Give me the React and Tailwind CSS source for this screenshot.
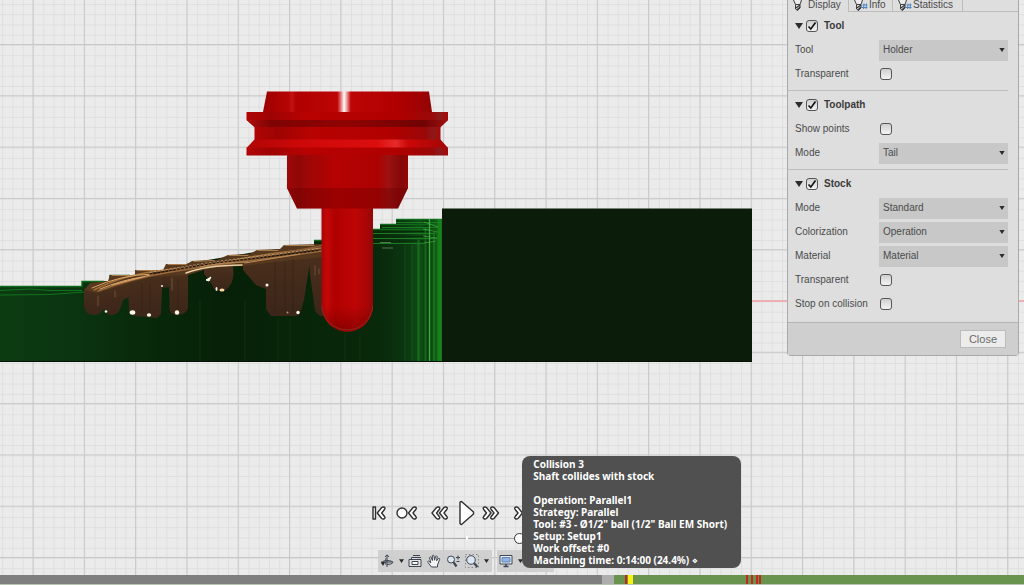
import React, { useState } from 'react';

const TOOLTIP_LINES = [
  'Collision 3',
  'Shaft collides with stock',
  '',
  'Operation: Parallel1',
  'Strategy: Parallel',
  'Tool: #3 - Ø1/2" ball (1/2" Ball EM Short)',
  'Setup: Setup1',
  'Work offset: #0',
  'Machining time: 0:14:00 (24.4%) ⋄',
];

function Scene() {
  return (
    <svg
      className="absolute inset-0 w-full h-full"
      viewBox="0 0 1024 575"
      preserveAspectRatio="xMidYMid slice"
      aria-hidden="true"
    >
      <defs>
        <pattern id="minor" x="33" y="45" width="10.26" height="10.26" patternUnits="userSpaceOnUse">
          <path d="M0 .5H10.26M.5 0V10.26" stroke="#dfdfdf" strokeWidth="1" />
        </pattern>
        <pattern id="major" x="32.5" y="44" width="51.3" height="51.3" patternUnits="userSpaceOnUse">
          <path d="M0 .5H51.3M.5 0V51.3" stroke="#c8c8c8" strokeWidth="1" />
        </pattern>
        <linearGradient id="green" gradientUnits="userSpaceOnUse" x1="0" x2="442" y1="0" y2="0">
          <stop offset="0" stopColor="#0c3b12" />
          <stop offset=".17" stopColor="#0b3410" />
          <stop offset=".3" stopColor="#092b0c" />
          <stop offset=".5" stopColor="#062007" />
          <stop offset=".72" stopColor="#08260a" />
          <stop offset=".86" stopColor="#09290b" />
          <stop offset=".915" stopColor="#0b3510" />
          <stop offset=".95" stopColor="#0f4d16" />
          <stop offset=".965" stopColor="#0a3d0e" />
          <stop offset="1" stopColor="#176f1b" />
        </linearGradient>
        <linearGradient id="cone" x1="0" x2="1" y1="0" y2="0">
          <stop offset="0" stopColor="#9e0000" />
          <stop offset=".15" stopColor="#b50404" />
          <stop offset=".17" stopColor="#c01313" />
          <stop offset=".2" stopColor="#b00000" />
          <stop offset=".44" stopColor="#bd0505" />
          <stop offset=".46" stopColor="#e57070" />
          <stop offset=".48" stopColor="#ffffff" />
          <stop offset=".5" stopColor="#e88080" />
          <stop offset=".52" stopColor="#bd0505" />
          <stop offset=".8" stopColor="#b00000" />
          <stop offset="1" stopColor="#930505" />
        </linearGradient>
        <linearGradient id="flange" x1="0" x2="1" y1="0" y2="0">
          <stop offset="0" stopColor="#b00505" />
          <stop offset=".12" stopColor="#9e0303" />
          <stop offset=".3" stopColor="#b80202" />
          <stop offset=".75" stopColor="#b00000" />
          <stop offset=".92" stopColor="#990808" />
          <stop offset=".96" stopColor="#8d1a1a" />
          <stop offset="1" stopColor="#a80808" />
        </linearGradient>
        <linearGradient id="groove" x1="0" x2="1" y1="0" y2="0">
          <stop offset="0" stopColor="#b11010" />
          <stop offset=".12" stopColor="#7f0303" />
          <stop offset=".5" stopColor="#900303" />
          <stop offset=".88" stopColor="#700303" />
          <stop offset="1" stopColor="#a01010" />
        </linearGradient>
        <linearGradient id="bright" x1="0" x2="1" y1="0" y2="0">
          <stop offset="0" stopColor="#b00505" />
          <stop offset=".25" stopColor="#cc0808" />
          <stop offset=".65" stopColor="#dd0e0e" />
          <stop offset=".74" stopColor="#e62a2a" />
          <stop offset=".8" stopColor="#cc0808" />
          <stop offset="1" stopColor="#a30505" />
        </linearGradient>
        <linearGradient id="body" x1="0" x2="1" y1="0" y2="0">
          <stop offset="0" stopColor="#a00808" />
          <stop offset=".1" stopColor="#8e0707" />
          <stop offset=".16" stopColor="#9d0707" />
          <stop offset=".4" stopColor="#b50202" />
          <stop offset=".75" stopColor="#ad0202" />
          <stop offset=".84" stopColor="#9b1212" />
          <stop offset=".94" stopColor="#850808" />
          <stop offset="1" stopColor="#950505" />
        </linearGradient>
        <linearGradient id="shaft" x1="0" x2="1" y1="0" y2="0">
          <stop offset="0" stopColor="#a50505" />
          <stop offset=".1" stopColor="#c40808" />
          <stop offset=".25" stopColor="#b00000" />
          <stop offset=".65" stopColor="#bd0505" />
          <stop offset=".9" stopColor="#a60606" />
          <stop offset="1" stopColor="#900808" />
        </linearGradient>
        <linearGradient id="tip" x1="0" x2="0" y1="0" y2="1">
          <stop offset="0" stopColor="#7a0000" stopOpacity="0" />
          <stop offset="1" stopColor="#7a0000" stopOpacity=".7" />
        </linearGradient>
        <linearGradient id="chip" x1="0" x2="0" y1="0" y2="1">
          <stop offset="0" stopColor="#4a2f1c" />
          <stop offset="1" stopColor="#3b2619" />
        </linearGradient>
      </defs>

      {/* Work plane */}
      <rect width="1024" height="575" fill="#ebebeb" />
      <rect width="1024" height="575" fill="url(#minor)" />
      <rect width="1024" height="575" fill="url(#major)" />
      <path d="M752 301H1024" stroke="#efb0b4" strokeWidth="2" />

      {/* Machined side of the stock */}
      <path
        d="M0 286H82V281H110V275H135V270H163L190 263L255 252L314 245V240H322V235H373V229H380V224H396V219H442V362H0Z"
        fill="url(#green)"
      />
      <path d="M0 286.5H82V281.5H104M110 281V275.5H130M314 240.5H322M373 229.5H430M380 224.5H436M396 219.5H442" stroke="#0d6a18" strokeWidth="1.4" fill="none" />
      <path d="M0 290.5L30 289L50 290.5H82M0 295L50 294.5L84 292" stroke="#12741c" strokeWidth="1" fill="none" />
      <path d="M373 233.5H434M373 238.5H438M373 243.5H424M382 227.5H438M396 222.5H442" stroke="#1b7b22" strokeWidth="1.2" fill="none" />
      <path d="M373 231.5H436M373 236.5H436M373 241H436" stroke="#062c08" strokeWidth="1.2" fill="none" />
      <path d="M380 242.5H391M382 248H393" stroke="#7fa77a" strokeWidth="1" opacity=".6" />
      <path d="M405 245V362M412 245V362" stroke="#1b6a20" strokeWidth="1" opacity=".5" />
      <path d="M418.5 240V362M425.5 228V362M434 232V362" stroke="#1d7a22" strokeWidth="2" opacity=".7" />
      <path d="M429.5 219V362" stroke="#3fae40" strokeWidth="1.3" />
      <path d="M439.5 219V362" stroke="#198a1d" strokeWidth="4" opacity=".75" />
      <path d="M424 222L438 227M423 229L437 232M423 236L437 238M424 243L436 241" stroke="#4cae48" strokeWidth="1" opacity=".7" />
      <path d="M278 318V362M290 318V362M245 300V362M200 300V362M345 334V362M360 334V362" stroke="#0f3a12" strokeWidth="2" opacity=".35" />

      {/* Untouched stock */}
      <rect x="442" y="208.500" width="310" height="153.500" fill="#0b1c0b" />
      <path d="M0 361.500H752" stroke="#031205" strokeWidth="1" />

      {/* Collision area */}
      <g fill="url(#chip)">
        <path d="M84 290L104 283V306Q102 315 94 315Q85 315 84 306Z" />
        <path d="M103 285L129 277V297L123 300L120 309Q117 316 109 315L103 309Z" />
        <path d="M128 280L164 270L162 290L161 314L157 318L134 316L129 312Z" />
        <path d="M162 273H176V286L163 288Z" />
        <path d="M169 270H188V308Q186 315 178 315Q170 315 169.500 309Z" />
        <path d="M204 268L233 266Q235 280 229 287Q223 294 214 289Q210 280 204 274Z" />
        <path d="M243 263L311 252L309 268L304 300L300 314L297 316H271L266 309V289L256 285L243 270Z" />
        <path d="M308 252H323V316Q317 316 315 310L310 275Z" />
      </g>
      <path
        d="M84 290L90 283L108 281L110 275H135V270H163L166 264H187L192 261L217 260L228 255L250 254L257 250L280 249L284 245L323 244V257L285 261L243 266L210 268L188 275L150 277L120 286L97 293Z"
        fill="#56381f"
      />
      <g fill="none" strokeLinecap="round">
        <path d="M112 275.500H133M137 270.500H160M168 264.500H186M194 261.500L214 260.500M229 255.500H248M258 250.500H278M285 245.500H314" stroke="#a97b4b" strokeWidth="1" />
        <path d="M94 290Q125 274 165 270T240 259T322 248" stroke="#a2703b" strokeWidth="1.500" />
        <path d="M98 291Q130 279 165 273T240 262T322 251" stroke="#9a6a3c" strokeWidth="1.500" />
        <path d="M92 288Q120 275 152 274M100 289Q122 280 142 277M112 285L150 275" stroke="#dca566" strokeWidth="1" />
        <path d="M190 267Q245 260 284 253T322 245" stroke="#8a5f37" strokeWidth="1.500" />
        <path d="M150 274Q205 264 240 260T320 250" stroke="#1f150e" strokeWidth="1.300" strokeDasharray="1.500 2.500" />
        <path d="M150 272.500Q205 262.500 240 258.500T320 248.500" stroke="#cdb28c" strokeWidth="1" strokeDasharray="1.500 2.500" opacity=".7" />
        <path d="M186 273Q205 265.500 242 265" stroke="#e9cfa4" strokeWidth="1.500" />
        <path d="M200 267Q222 262 248 262M245 263L300 254" stroke="#b98a58" strokeWidth="1" />
        <path d="M98 296V306M115 291V297M172 278V290M315 266V275M319 269V274" stroke="#8a6a50" strokeWidth="1" opacity=".6" />
        <path d="M275 262V312M285 262V312M293 260V312M142 284V312M150 284V314M178 280V308" stroke="#2e1d12" strokeWidth="2" opacity=".25" />
      </g>
      <g fill="#fff8ec">
        <ellipse cx="132.500" cy="312.500" rx="2.800" ry="2.200" />
        <ellipse cx="149" cy="315" rx="2.200" ry="1.800" />
        <circle cx="177" cy="312.500" r="2.200" />
        <circle cx="106" cy="311.500" r="1.300" />
        <path d="M206 280L211 277L209 281Z" stroke="#fff8ec" />
        <ellipse cx="216.500" cy="289" rx="1" ry="2" />
        <ellipse cx="222" cy="290" rx="2.500" ry="1.500" fill="#ffd9a0" />
        <circle cx="267" cy="285" r="1.500" />
        <circle cx="298" cy="312.500" r="1.700" />
        <circle cx="287.500" cy="312.500" r="1" fill="#c79465" />
        <circle cx="162" cy="286" r="1" />
      </g>

      {/* Cutter and holder */}
      <path d="M321.500 206H373V306A25.750 25.750 0 0 1 321.500 306Z" fill="url(#shaft)" />
      <path d="M322 306H372.500A25.250 25.250 0 0 1 322 306Z" fill="url(#tip)" />
      <path d="M321.800 306A25.500 25.500 0 0 0 372.700 306" fill="none" stroke="#8a2a1c" strokeWidth="1" />
      <path d="M267 91.500H429L432 112H263Z" fill="url(#cone)" />
      <path d="M246.500 112H448V120L440 127.500H255L246.500 120Z" fill="url(#flange)" />
      <path d="M246.500 120H448L440 127.500H255Z" fill="url(#groove)" />
      <path d="M254.500 127H440.500V140H254.500Z" fill="url(#flange)" />
      <path d="M254.500 139.500H440.500L448 148H246.500Z" fill="url(#bright)" />
      <path d="M246.500 147.500H448V155.500H246.500Z" fill="url(#flange)" />
      <path d="M287 155H408V188.500H287Z" fill="url(#body)" />
      <path d="M287 188H408L398 208.500H297Z" fill="url(#body)" />
      <path d="M287 188H408L398 208.500H297Z" fill="#6a0000" opacity=".35" />
    </svg>
  );
}

function Caret({ className }) {
  return (
    <svg className={className} viewBox="0 0 8 6" fill="#2b2b2b" aria-hidden="true">
      <path d="M0 0H8L4 6Z" />
    </svg>
  );
}

function TabIcon({ hash }) {
  return (
    <svg className="w-4 h-3 shrink-0" viewBox="0 0 16 12" fill="none" stroke="#3c3c3c" aria-hidden="true">
      <path d="M1.500 0L3.500 4.500V9L5.500 10.500L8 8V4.500L9.500 0" fill="#ececec" />
      <path d="M3.500 4.500H8" />
      <path d="M3.800 8L8 5M5 10L8 7" strokeWidth="1.4" />
      {hash && <path d="M11 3.500L10.500 9M13.500 3.500L13 9M9.500 5H14.500M9 7.500H14.500" stroke="#4a86c8" />}
    </svg>
  );
}

function Check({ id, label, checked, onChange }) {
  return (
    <span className="relative flex w-3 h-3 shrink-0">
      <input
        id={id}
        type="checkbox"
        aria-label={label}
        checked={checked}
        onChange={onChange}
        className="appearance-none w-3 h-3 rounded-[3px] border border-[#555] bg-gradient-to-b from-[#cfcfcf] to-[#f4f4f4]"
      />
      {checked && (
        <svg className="absolute inset-0 w-3 h-3 pointer-events-none" viewBox="0 0 12 12" fill="none" stroke="#111" strokeWidth="1.6">
          <path d="M2.500 6.500L4.800 9L9.500 2.500" />
        </svg>
      )}
    </span>
  );
}

function Section({ title, children }) {
  const [on, setOn] = useState(true);
  const id = `section-${title.toLowerCase()}`;
  return (
    <section className="mr-2.5 pt-0.5 pb-1 border-b border-[#bdbdbd] last:border-b-0 last:pb-1.5">
      <div className="flex items-center h-6 pl-[7px]">
        <button type="button" aria-label={`Collapse ${title}`} className="w-[11px]">
          <Caret className="w-2 h-1.5" />
        </button>
        <Check id={id} checked={on} onChange={() => setOn(!on)} />
        <label htmlFor={id} className="ml-1.5 font-bold text-[#3a3a3a]">
          {title}
        </label>
      </div>
      {children}
    </section>
  );
}

function Row({ id, label, children }) {
  return (
    <div className="flex items-center h-6 pl-[7px]">
      <label htmlFor={id} className="w-[84px] shrink-0">
        {label}
      </label>
      {children}
    </div>
  );
}

function SelectRow({ id, label, value }) {
  return (
    <Row id={id} label={label}>
      <div className="relative flex-1">
        <select id={id} className="appearance-none block w-full h-[21px] pl-1 bg-[#c8c8c8] text-[#4a4a4a]">
          <option>{value}</option>
        </select>
        <Caret className="absolute right-[3px] top-2 w-1.5 h-1 pointer-events-none" />
      </div>
    </Row>
  );
}

function CheckRow({ id, label }) {
  const [on, setOn] = useState(false);
  return (
    <Row id={id} label={label}>
      <span className="pl-px">
        <Check id={id} checked={on} onChange={() => setOn(!on)} />
      </span>
    </Row>
  );
}

function SettingsPanel() {
  return (
    <aside className="absolute top-0 right-[5px] w-[232px] border border-t-0 border-[#a9a9a9] rounded-b-sm bg-[#dedede] text-[10px] leading-3 text-[#4a4a4a]">
      <div className="flex h-3">
        <button type="button" className="flex items-start w-[60px] pl-1 leading-[9px]">
          <TabIcon />
          Display
        </button>
        <div className="flex flex-1 border-b border-[#bcbcbc]">
          <button type="button" className="flex items-start w-[45px] pl-1 border-x border-[#bcbcbc] leading-[9px]">
            <TabIcon hash />
            Info
          </button>
          <button type="button" className="flex items-start w-[70px] pl-1 border-r border-[#bcbcbc] leading-[9px]">
            <TabIcon hash />
            Statistics
          </button>
        </div>
      </div>

      <div>
        <Section title="Tool">
          <SelectRow id="tool-kind" label="Tool" value="Holder" />
          <CheckRow id="tool-transparent" label="Transparent" />
        </Section>
        <Section title="Toolpath">
          <CheckRow id="show-points" label="Show points" />
          <SelectRow id="toolpath-mode" label="Mode" value="Tail" />
        </Section>
        <Section title="Stock">
          <SelectRow id="stock-mode" label="Mode" value="Standard" />
          <SelectRow id="colorization" label="Colorization" value="Operation" />
          <SelectRow id="material" label="Material" value="Material" />
          <CheckRow id="stock-transparent" label="Transparent" />
          <CheckRow id="stop-on-collision" label="Stop on collision" />
        </Section>
      </div>

      <div className="flex items-center justify-end h-[33px] pr-3 border-t border-[#b4b4b4] bg-[#cfcfcf]">
        <button type="button" className="h-[18px] px-2 border border-[#bcbcbc] bg-[#ececec] text-[11px] text-[#6a6a6a]">
          Close
        </button>
      </div>
    </aside>
  );
}

function PlayButton({ label, className, viewBox, children }) {
  return (
    <button type="button" aria-label={label} className="flex items-center justify-center h-7">
      <svg className={className} viewBox={viewBox} fill="#fff" stroke="#303030" strokeWidth="1.4" strokeLinejoin="round">
        {children}
      </svg>
    </button>
  );
}

const CHEVRON = 'M5.500 1.500Q6.500 .8 8 1.200Q9.300 1.900 8.500 3.200L5.500 7L8.500 10.800Q9.300 12.100 8 12.800Q6.500 13.200 5.500 12.500L1 7Z';

function Player() {
  return (
    <div className="flex items-center h-7">
      <PlayButton label="Go to start" className="w-[14px] h-[14px]" viewBox="0 0 14 14">
        <path d="M1 1H3.500V13H1Z" />
        <path d={CHEVRON} transform="translate(4.200)" />
      </PlayButton>
      <span className="w-[10px]" />
      <PlayButton label="Previous operation" className="w-[22px] h-[14px]" viewBox="0 0 22 14">
        <circle cx="6" cy="7" r="5" />
        <path d={CHEVRON} transform="translate(11.500)" />
      </PlayButton>
      <span className="w-[13px]" />
      <PlayButton label="Slower" className="w-[18px] h-[14px]" viewBox="0 0 18 14">
        <path d={CHEVRON} transform="translate(7.500)" />
        <path d={CHEVRON} />
      </PlayButton>
      <span className="w-[10px]" />
      <PlayButton label="Play" className="w-4 h-[26px]" viewBox="0 0 16 26">
        <path d="M2.500 1.500L14.500 12V14L2.500 24.500Q1 24.500 1 23V2.500Q1 1.500 2.500 1.500Z" />
      </PlayButton>
      <span className="w-[7px]" />
      <PlayButton label="Faster" className="w-[18px] h-[14px]" viewBox="0 0 18 14">
        <path d={CHEVRON} transform="matrix(-1 0 0 1 10 0)" />
        <path d={CHEVRON} transform="matrix(-1 0 0 1 17.500 0)" />
      </PlayButton>
      <span className="w-[13px]" />
      <PlayButton label="Next operation" className="w-[22px] h-[14px]" viewBox="0 0 22 14">
        <circle cx="16" cy="7" r="5" />
        <path d={CHEVRON} transform="matrix(-1 0 0 1 10.500 0)" />
      </PlayButton>
      <span className="w-[10px]" />
      <PlayButton label="Go to end" className="w-[14px] h-[14px]" viewBox="0 0 14 14">
        <path d="M10.500 1H13V13H10.500Z" />
        <path d={CHEVRON} transform="matrix(-1 0 0 1 9.800 0)" />
      </PlayButton>
    </div>
  );
}

function NavButton({ label, children }) {
  return (
    <button type="button" aria-label={label} className="flex items-center justify-center w-[19px] h-full">
      <svg className="w-[14px] h-[14px]" viewBox="0 0 14 14" fill="none" stroke="#3f4652">
        {children}
      </svg>
    </button>
  );
}

function NavCaret({ label }) {
  return (
    <button type="button" aria-label={label} className="flex items-center justify-center w-[9px] h-full">
      <Caret className="w-[5px] h-1" />
    </button>
  );
}

function NavBar() {
  return (
    <div className="flex gap-[5px] h-[22px]">
      <div className="flex items-center bg-[#cdcdcd]/90 w-[114px]">
        <NavButton label="Orbit">
          <path d="M7 1V13M5 3L7 .8L9 3M3 8H13" />
          <path d="M3 10.500Q1 9.500 1.500 8.500Q3 6.500 8 6.500Q13 7 13 8.500Q12 10.500 7 10.500" />
          <path d="M6 4Q4.500 7 6 11" strokeWidth=".8" />
          <path d="M1 7.500L5 8.500L3 12Z" fill="#2b2b2b" stroke="none" />
        </NavButton>
        <NavCaret label="Orbit options" />
        <NavButton label="Look at">
          <path d="M1 5.500H13V12.500H1ZM3.500 5.500V3.500H13M5 1.500H12" fill="#e3e3e3" />
          <path d="M4 7.500H10V10.500H4Z" fill="#fff" />
        </NavButton>
        <NavButton label="Pan">
          <path
            d="M4.500 13L1 8.500Q.3 7.200 1.500 7L3.800 8.700L2.500 3.500Q3.300 2.300 4.200 3.300L5.400 6.500L5.300 1.700Q6.200.5 7 1.700L7.500 6.200L8.700 2.200Q9.800 1.500 10.200 2.600L9.600 6.800L11.600 4.400Q12.800 4.200 12.700 5.300L10.500 11V13Z"
            fill="#f4f4f4"
          />
        </NavButton>
        <NavButton label="Zoom">
          <circle cx="5" cy="5.500" r="3.500" fill="#dbe7f2" />
          <path d="M7.500 8.200L10.500 12.500" strokeWidth="2.200" />
          <path d="M10 3.500H14M12 1.500V5.500M10.500 7.500H13.500" />
        </NavButton>
        <NavButton label="Zoom window">
          <path d="M.5 .5H13.500V13.500H.5Z" strokeDasharray="1.500 2" stroke="#8a8a8a" />
          <circle cx="6" cy="6" r="4.300" fill="#dbe7f2" />
          <path d="M9.200 9.200L12.500 13" strokeWidth="2.200" />
        </NavButton>
        <NavCaret label="Zoom options" />
      </div>
      <div className="flex items-center bg-[#cdcdcd]/90 w-[57px]">
        <NavButton label="Display settings">
          <path d="M1 1.500H13V10H1Z" fill="#f0f0f0" />
          <path d="M3 3.500H11V8H3Z" fill="#8fb3e2" stroke="#5c86c0" />
          <path d="M4.500 12.500H9.500M7 10V12.500" strokeWidth="1.500" />
        </NavButton>
        <NavCaret label="Display options" />
      </div>
    </div>
  );
}

function Controls() {
  return (
    <div className="absolute inset-x-0 bottom-[3px] flex flex-col items-center pr-[93px]">
      <Player />
      <div className="relative flex items-center w-[212px] h-[22px] mb-px">
        <input
          type="range"
          aria-label="Playback speed"
          min="0"
          max="100"
          defaultValue="77"
          className="appearance-none w-full h-px bg-gradient-to-r from-transparent via-[#a5a5a5] to-[#a5a5a5] [&::-webkit-slider-thumb]:appearance-none [&::-webkit-slider-thumb]:w-[11px] [&::-webkit-slider-thumb]:h-[11px] [&::-webkit-slider-thumb]:rounded-full [&::-webkit-slider-thumb]:border [&::-webkit-slider-thumb]:border-[#333] [&::-webkit-slider-thumb]:bg-white"
        />
        <span className="absolute left-1/2 w-0.5 h-1 bg-white" />
      </div>
      <NavBar />
    </div>
  );
}

function CollisionTooltip() {
  return (
    <div
      role="tooltip"
      className="absolute left-[51%] bottom-[7px] py-0.5 pl-[11px] pr-3.5 rounded-lg bg-[#505050] text-white text-[10px] leading-3 font-bold whitespace-nowrap font-['Noto_Sans','DejaVu_Sans',sans-serif]"
    >
      {TOOLTIP_LINES.map((line, i) => (
        <div key={i} className="h-3">
          {line}
        </div>
      ))}
    </div>
  );
}

function Timeline() {
  return (
    <footer className="flex h-2.5 bg-[#69944f] border-b border-[#b9c4b2]">
      <div className="w-[58.8%] bg-[#7f7f7f]" />
      <div className="w-3 bg-[#adadad]" />
      <div className="flex flex-1">
        <span className="w-0.5 ml-[11px] bg-[#c4281c]" />
        <span className="w-[5px] ml-px bg-[#f6f312]" />
        <span className="w-0.5 ml-[113px] bg-[#c4281c]" />
        <span className="w-0.5 ml-[3px] bg-[#c4281c]" />
        <span className="w-0.5 ml-[3px] bg-[#c4281c]" />
        <span className="w-0.5 ml-px bg-[#c4281c]" />
      </div>
    </footer>
  );
}

export default function App() {
  return (
    <div className="flex flex-col h-screen overflow-hidden font-['Liberation_Sans',Arial,sans-serif]">
      <main className="relative flex-1 overflow-hidden bg-[#ebebeb]">
        <Scene />
        <Controls />
        <SettingsPanel />
        <CollisionTooltip />
      </main>
      <Timeline />
    </div>
  );
}
